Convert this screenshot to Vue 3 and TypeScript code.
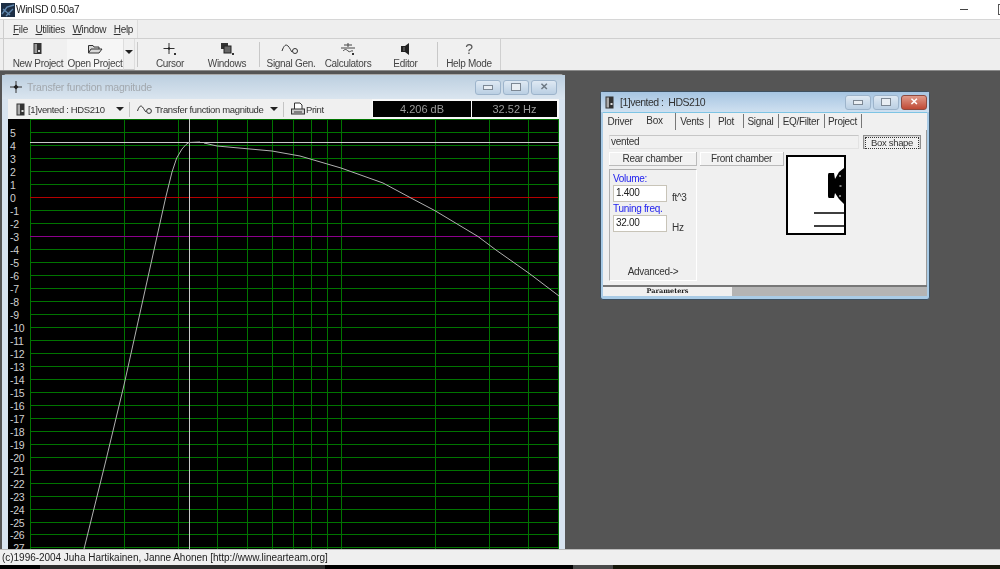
<template>
  <div class="app">
    <div class="titlebar soft">
      <svg class="logo" viewBox="0 0 14 14" width="14" height="14">
        <rect width="14" height="14" fill="#1d2f45" />
        <path d="M1 11 L6 4 L13 2 M2 6 L9 12 M5 13 L12 6" stroke="#5f86ad" stroke-width="1.4" fill="none" />
      </svg>
      <span class="app-name">WinISD 0.50a7</span>
      <span class="win-min"></span>
      <span class="win-max"></span>
    </div>

    <div class="menubar soft">
      <div class="menu-group">
        <a v-for="m in menus" :key="m.rest" class="menu-item"><u>{{ m.key }}</u>{{ m.rest }}</a>
      </div>
    </div>

    <div class="toolbar-row soft">
      <div class="toolbar">
        <button class="tool t-new">
          <svg viewBox="0 0 12 14" width="12" height="14"><rect x="1.5" y="1" width="8" height="11" fill="#333" /><rect x="2.5" y="2" width="2.5" height="9" fill="#999" /><rect x="6" y="8" width="2" height="2" fill="#ddd" /></svg>
          <span>New Project</span>
        </button>
        <button class="tool t-open">
          <svg viewBox="0 0 16 14" width="16" height="14"><path d="M1.5 11 V3.5 H6 L7 5 H12 V7 M1.5 11 L4 7 H15 L12 11 Z" fill="#d8d8d8" stroke="#333" /></svg>
          <span>Open Project</span>
        </button>
        <button class="tool-arrow"><i class="caret"></i></button>
        <i class="tb-sep"></i>
        <button class="tool t-cursor">
          <svg viewBox="0 0 16 14" width="16" height="14"><path d="M7 1 V12 M1.5 6.5 H12.5" stroke="#333" /><path d="M5.5 6.5 L7 5 L8.5 6.5 L7 8 Z" fill="#222" /><rect x="12" y="11" width="2" height="2" fill="#333" /></svg>
          <span>Cursor</span>
        </button>
        <button class="tool t-windows">
          <svg viewBox="0 0 16 14" width="16" height="14"><rect x="2" y="1" width="7" height="6" fill="#333" /><rect x="5" y="4" width="7" height="7" fill="#666" stroke="#222" /><rect x="13" y="11" width="2" height="2" fill="#333" /></svg>
          <span>Windows</span>
        </button>
        <i class="tb-sep"></i>
        <button class="tool t-signal">
          <svg viewBox="0 0 20 14" width="20" height="14"><path d="M1 9 C3 3 5 2 7 4 C9 6 10 9 11 10" stroke="#333" fill="none" /><circle cx="14" cy="9" r="2.5" stroke="#333" fill="none" /></svg>
          <span>Signal Gen.</span>
        </button>
        <button class="tool t-calc">
          <svg viewBox="0 0 16 14" width="16" height="14"><path d="M4 3 H12 M1 6 H15 M3 9 C5 7 6 7 8 9 C10 11 11 8 13 9" stroke="#444" fill="none" /><path d="M8 1 V5" stroke="#444" /><rect x="12" y="11" width="2" height="2" fill="#333" /></svg>
          <span>Calculators</span>
        </button>
        <button class="tool t-editor">
          <svg viewBox="0 0 12 14" width="12" height="14"><path d="M1 4 H5 L9 1 V13 L5 10 H1 Z" fill="#222" /><path d="M4 5 V9" stroke="#777" /></svg>
          <span>Editor</span>
        </button>
        <i class="tb-sep"></i>
        <button class="tool t-help">
          <b class="help-glyph">?</b>
          <span>Help Mode</span>
        </button>
      </div>
    </div>

    <div class="desktop">
      <section class="mdi graph-win">
        <header class="caption soft">
          <svg viewBox="0 0 12 12" width="12" height="12"><path d="M6 0 V12 M0 6 H12" stroke="#333" /><path d="M3.5 6 L6 3.5 L8.5 6 L6 8.5 Z" fill="#222" /></svg>
          <span class="caption-text">Transfer function magnitude</span>
          <div class="caption-btns">
            <span class="cbtn"><i class="g-min"></i></span>
            <span class="cbtn"><i class="g-rest"></i></span>
            <span class="cbtn"><i class="g-x">✕</i></span>
          </div>
        </header>
        <div class="graph-tools soft">
          <div class="combo c-project">
            <svg viewBox="0 0 10 13" width="10" height="13"><rect x="0.5" y="0.5" width="8" height="12" fill="#333" /><rect x="1.5" y="1.5" width="2.5" height="10" fill="#aaa" /><rect x="5.5" y="7" width="2" height="2" fill="#ddd" /></svg>
            <span>[1]vented : HDS210</span>
            <i class="caret"></i>
          </div>
          <i class="gt-sep"></i>
          <div class="combo c-func">
            <svg viewBox="0 0 16 9" width="16" height="9"><path d="M0.5 6 C2 1 4 0 5.5 2 C7 4 8 6 9 7" stroke="#333" fill="none" /><circle cx="12" cy="6" r="2.4" stroke="#333" fill="none" /></svg>
            <span>Transfer function magnitude</span>
            <i class="caret"></i>
          </div>
          <i class="gt-sep"></i>
          <div class="print">
            <svg viewBox="0 0 14 14" width="14" height="14"><path d="M3.5 7 V1 H9 L11 3 V7" fill="#fff" stroke="#333" /><rect x="0.5" y="7" width="13" height="5" fill="#ccc" stroke="#333" /><path d="M3 10 H11" stroke="#333" /></svg>
            <span>Print</span>
          </div>
          <div class="readouts">
            <div class="readout r-db">4.206 dB</div>
            <div class="readout r-hz">32.52 Hz</div>
          </div>
        </div>
        <svg class="plot" viewBox="8 119 551 430" width="551" height="430">
          <rect x="8" y="119" width="551" height="430" fill="#000" />
          <line v-for="x in vLines" :key="'v' + x" :x1="x" :x2="x" y1="119" y2="549" class="grid" />
          <line
            v-for="r in rows"
            :key="'h' + r.value"
            x1="30"
            x2="559"
            :y1="r.y"
            :y2="r.y"
            :stroke="r.color"
          />
          <line x1="30" x2="559" y1="119.5" y2="119.5" class="grid" />
          <line x1="558.5" x2="558.5" y1="119" y2="549" class="grid" />
          <line x1="30" x2="559" y1="142.5" y2="142.5" class="cursor-line" />
          <line x1="189.5" x2="189.5" y1="119" y2="549" class="cursor-line" />
          <path :d="curveLeft" class="curve" />
          <path :d="curveRight" class="curve" />
          <text v-for="r in rows" :key="'t' + r.value" x="10" :y="r.y + 4" class="tick">{{ r.value }}</text>
        </svg>
      </section>

      <section class="mdi param-win soft">
        <header class="caption active">
          <svg viewBox="0 0 10 13" width="10" height="13"><rect x="0.5" y="0.5" width="8" height="12" fill="#333" /><rect x="1.5" y="1.5" width="2.5" height="10" fill="#aaa" /><rect x="5.5" y="7" width="2" height="2" fill="#ddd" /></svg>
          <span class="caption-text">[1]vented :&nbsp; HDS210</span>
          <div class="caption-btns">
            <span class="cbtn"><i class="g-min"></i></span>
            <span class="cbtn"><i class="g-rest"></i></span>
            <span class="cbtn close"><i class="g-x">✕</i></span>
          </div>
        </header>
        <nav class="tabs">
          <span
            v-for="t in tabs"
            :key="t.name"
            class="tab"
            :class="{ on: t.name === 'Box', plain: t.name === 'Driver' }"
            :style="{ width: t.width + 'px' }"
          >{{ t.name }}</span>
        </nav>
        <div class="panel">
          <div class="shape-row">
            <div class="shape-field">vented</div>
            <button class="shape-btn"><span>Box shape</span></button>
          </div>
          <div class="panel-body">
            <div class="rear-col">
              <button class="flat-btn rear">Rear chamber</button>
              <div class="rear-box">
                <label>Volume:</label>
                <div class="field-row"><div class="input">1.400</div><span class="unit">ft^3</span></div>
                <label class="second">Tuning freq.</label>
                <div class="field-row"><div class="input">32.00</div><span class="unit">Hz</span></div>
                <div class="advanced">Advanced-&gt;</div>
              </div>
            </div>
            <button class="flat-btn front">Front chamber</button>
            <svg class="box-pic" viewBox="0 0 60 80" width="60" height="80">
              <rect x="1" y="1" width="58" height="78" fill="#fff" stroke="#000" stroke-width="2" />
              <path d="M43 18 H48 L49 24 L53 17 L58 13 V49 L53 44 L49 38 L48 43 H43 Q42 43 42 41 V20 Q42 18 43 18 Z" fill="#000" />
              <path d="M54 20 V22 M53.5 31 H55.5 M54 40 V42" stroke="#fff" />
              <path d="M28 58 H58 M28 71 H58" stroke="#000" stroke-width="1.5" />
            </svg>
          </div>
        </div>
        <div class="bottom-tabs">
          <span class="b-tab">Parameters</span>
          <span class="b-rest"></span>
        </div>
      </section>
    </div>

    <div class="statusbar soft">(c)1996-2004 Juha Hartikainen, Janne Ahonen [http://www.linearteam.org]</div>
    <div class="taskstrip">
      <i class="ts-a"></i><i class="ts-b"></i><i class="ts-c"></i><i class="ts-d"></i>
    </div>
  </div>
</template>

<script setup lang="ts">
import { computed } from 'vue';

const menus = [
  { key: 'F', rest: 'ile' },
  { key: 'U', rest: 'tilities' },
  { key: 'W', rest: 'indow' },
  { key: 'H', rest: 'elp' },
];

const tabs = [
  { name: 'Driver', width: 30 },
  { name: 'Box', width: 40 },
  { name: 'Vents', width: 33 },
  { name: 'Plot', width: 33 },
  { name: 'Signal', width: 34 },
  { name: 'EQ/Filter', width: 45 },
  { name: 'Project', width: 36 },
];

const vLines = [30.5, 124.5, 178.5, 217.5, 247.5, 272.5, 293.5, 311.5, 327.5, 341.5, 435.5, 489.5, 528.5];

const rows = computed(() => {
  const out = [];
  for (let v = 5; v >= -27; v--) {
    let color = '#007400';
    if (v === 0) color = '#b40000';
    if (v === -3) color = '#8c008c';
    out.push({ value: v, y: Math.round(197 - v * 12.98) + 0.5, color });
  }
  return out;
});

function toPath(points: number[][]): string {
  return points.map((p, i) => (i === 0 ? 'M' : 'L') + p[0] + ' ' + p[1]).join(' ');
}

const curveLeft = toPath([
  [84, 549], [106, 460], [124, 385], [154, 250], [165.7, 197.5], [172, 172], [176.7, 158],
  [182, 149], [186, 144.5], [189, 142.5], [200, 142],
]);
const curveRight = toPath([
  [204, 143], [217, 146], [250, 149], [272, 151], [300, 156], [341, 168], [383, 183], [410, 197.5],
  [435, 210.7], [478, 236.5], [496, 250], [530, 274], [559, 296],
]);
</script>

<style>
html,
body {
  margin: 0;
  background: #000;
}
</style>

<style scoped>
.app {
  width: 1000px;
  height: 569px;
  display: flex;
  flex-direction: column;
  overflow: hidden;
  font-family: "Liberation Sans", Arial, sans-serif;
  font-size: 10px;
  letter-spacing: -0.3px;
  color: #333;
}
/* the capture is a little soft everywhere except the plot lines */
.soft {
  filter: blur(0.35px);
}

.titlebar {
  height: 19px;
  flex: none;
  display: flex;
  align-items: center;
  background: #fff;
  padding-left: 1px;
  box-sizing: border-box;
}
.logo { flex: none; }
.app-name {
  margin-left: 1px;
  font-size: 10px;
  color: #222;
}
.win-min {
  margin-left: auto;
  width: 8px;
  height: 1px;
  background: #444;
}
.win-max {
  margin-left: 30px;
  margin-right: -10px;
  width: 10px;
  height: 9px;
  border: 1px solid #555;
  flex: none;
}

.menubar {
  height: 19px;
  flex: none;
  background: #eee;
  border-top: 1px solid #d6d6d6;
  box-sizing: border-box;
  display: flex;
}
.menu-group {
  width: 135px;
  margin-left: 3px;
  padding-left: 9px;
  box-sizing: border-box;
  display: flex;
  align-items: center;
  gap: 7.5px;
  border-left: 1px solid #ccc;
  border-right: 1px solid #ddd;
  background: #f0f0f0;
}
.menu-item {
  font-size: 10px;
  color: #333;
}

.toolbar-row {
  height: 33px;
  flex: none;
  background: #eee;
  border-top: 1px solid #cfcfcf;
  border-bottom: 1px solid #8a8a8a;
  box-sizing: border-box;
}
.toolbar {
  width: 498px;
  height: 100%;
  margin-left: 3px;
  padding-left: 5px;
  box-sizing: border-box;
  display: flex;
  align-items: stretch;
  border-left: 1px solid #ccc;
  border-right: 1px solid #cfcfcf;
  background: #f0f0f0;
}
.tool {
  border: 0;
  padding: 3px 0 0;
  margin: 0;
  background: none;
  font: inherit;
  letter-spacing: inherit;
  white-space: nowrap;
  color: #444;
  display: flex;
  flex-direction: column;
  align-items: center;
  justify-content: flex-start;
  gap: 2px;
  flex: none;
}
.tool svg { height: 14px; flex: none; }
.t-new { width: 58px; }
.t-open { width: 57px; background: #f6f6f6; border-right: 1px solid #ddd; border-bottom: 1px solid #c8c8c8; }
.t-cursor { width: 60px; margin-left: 2px; }
.t-windows { width: 54px; margin-right: 3px; }
.t-signal { width: 62px; }
.t-calc { width: 52px; }
.t-editor { width: 59px; margin-left: 2px; }
.t-help { width: 62px; }
.help-glyph {
  height: 14px;
  font-weight: normal;
  font-size: 14px;
  line-height: 14px;
  color: #555;
}
.tool-arrow {
  width: 13px;
  border: 0;
  border-right: 1px solid #ddd;
  border-bottom: 1px solid #c8c8c8;
  background: #f0f0f0;
  padding: 0 0 4px;
  display: flex;
  align-items: center;
  justify-content: center;
}
.caret {
  display: inline-block;
  width: 0;
  height: 0;
  border-left: 4px solid transparent;
  border-right: 4px solid transparent;
  border-top: 4px solid #222;
}
.tb-sep {
  width: 1px;
  margin: 3px 0 3px 2px;
  background: #c8c8c8;
  flex: none;
}

.desktop {
  flex: 1;
  position: relative;
  overflow: hidden;
  background: #555;
}
.mdi {
  position: absolute;
  box-sizing: border-box;
}
.graph-win {
  left: 2px;
  top: 3px;
  width: 563px;
  height: 500px;
  background: #d7e3ef;
  border-radius: 5px 5px 0 0;
  border-top: 1px solid #aaa;
  padding: 0 6px;
}
.caption {
  height: 24px;
  display: flex;
  align-items: center;
  gap: 5px;
  background: linear-gradient(#bccfe0, #dae5ef);
  margin: 0 -6px;
  padding: 0 8px 0 8px;
}
.caption-text {
  font-size: 10.5px;
  letter-spacing: -0.2px;
  color: #a2a8ae;
}
.caption-btns {
  margin-left: auto;
  display: flex;
  gap: 2px;
}
.cbtn {
  width: 26px;
  height: 15px;
  box-sizing: border-box;
  border: 1px solid #9db4cb;
  border-radius: 3px;
  background: linear-gradient(#dfe9f3, #bacfe3);
  display: flex;
  align-items: center;
  justify-content: center;
}
.cbtn.close {
  background: linear-gradient(#e09a8a, #c04a35);
  border-color: #8c4a40;
  color: #fff;
}
.g-min {
  width: 8px;
  height: 3px;
  background: #e9eef3;
  border: 1px solid #7d8894;
}
.g-rest {
  width: 8px;
  height: 6px;
  border: 1px solid #7d8894;
  background: #e9eef3;
}
.g-x {
  font-style: normal;
  font-size: 10px;
  line-height: 10px;
  font-weight: bold;
  color: #6d7883;
}
.close .g-x { color: #fff; }

.graph-tools {
  height: 20px;
  display: flex;
  align-items: center;
  background: #f0f0f0;
  padding-left: 8px;
  font-size: 9.5px;
  letter-spacing: -0.35px;
  color: #333;
  white-space: nowrap;
}
.combo {
  display: flex;
  align-items: center;
  flex: none;
}
.c-project { width: 109px; gap: 2px; }
.c-func { width: 149px; gap: 2px; padding-left: 7px; box-sizing: border-box; }
.c-project .caret, .c-func .caret { margin-left: auto; margin-right: 1px; }
.gt-sep {
  width: 1px;
  height: 15px;
  margin: 0 0 0 4px;
  background: #c4c4c4;
  flex: none;
}
.print {
  display: flex;
  align-items: center;
  gap: 1px;
  padding-left: 7px;
}
.readouts {
  margin-left: auto;
  display: flex;
  gap: 1px;
  background: #f8f8f8;
  height: 100%;
  padding: 2px 2px 2px 1px;
  box-sizing: border-box;
}
.readout {
  background: #000;
  color: #9a9a9a;
  display: flex;
  align-items: center;
  justify-content: center;
  font-size: 11px;
  letter-spacing: 0;
}
.r-db { width: 98px; }
.r-hz { width: 85px; }
.plot {
  display: block;
}
.grid { stroke: #007400; }
.cursor-line { stroke: #c8c8c8; }
.curve {
  stroke: #b0b0b0;
  fill: none;
}
.tick {
  fill: #d0d0d0;
  font-size: 10.5px;
  font-family: "Liberation Sans", Arial, sans-serif;
}

.param-win {
  left: 600px;
  top: 20px;
  width: 330px;
  height: 209px;
  background: #a9cbe6;
  border: 1px solid #3e5060;
  border-radius: 3px;
  padding: 0 2px 3px;
  display: flex;
  flex-direction: column;
}
.caption.active {
  height: 20px;
  flex: none;
  margin: 0 -2px;
  padding: 0 2px 0 4px;
  background: linear-gradient(#a6c5e2, #cfe0f0);
}
.caption.active .caption-text {
  color: #333;
  font-size: 10.5px;
  letter-spacing: -0.5px;
}
.caption.active .cbtn { width: 26px; }
.tabs {
  height: 18px;
  flex: none;
  display: flex;
  align-items: flex-end;
  padding-left: 2px;
  background: #f0f0f0;
  box-shadow: inset 0 1px 0 #7dc4e4;
}
.tab {
  height: 14px;
  margin-bottom: 2px;
  padding-right: 2px;
  display: flex;
  align-items: center;
  justify-content: center;
  font-size: 10px;
  color: #333;
  border-right: 1px solid #777;
  box-sizing: border-box;
  margin-right: 1px;
}
.tab.plain {
  border-right: 0;
  padding-right: 0;
}
.tab.on {
  height: 17px;
  margin-bottom: 0;
  padding-bottom: 3px;
  background: #f0f0f0;
}
.panel {
  flex: 1;
  background: #f0f0f0;
  padding: 5px 4px 0 6px;
  min-height: 0;
  border-right: 1px solid #999;
}
.shape-row {
  display: flex;
  height: 14px;
  gap: 4px;
}
.shape-field {
  width: 250px;
  box-sizing: border-box;
  border: 1px solid #e2e2e2;
  border-top-color: #c6c6c6;
  padding-left: 1px;
  line-height: 12px;
  font-size: 10px;
}
.shape-btn {
  width: 58px;
  padding: 1px;
  border: 1px solid #8e8e8e;
  background: #d8d8d8;
  font: inherit;
  letter-spacing: inherit;
  font-size: 9.5px;
  color: #333;
}
.shape-btn span {
  display: block;
  line-height: 10px;
  border: 1px dotted #333;
  background: #f0f0f0;
}
.panel-body {
  display: flex;
  align-items: flex-start;
  margin-top: 3px;
  gap: 3px;
}
.rear-col {
  width: 88px;
  flex: none;
}
.flat-btn {
  height: 14px;
  padding: 0;
  border: 0;
  border-right: 1px solid #bbb;
  border-bottom: 1px solid #bbb;
  background: #f2f2f2;
  font: inherit;
  letter-spacing: inherit;
  font-size: 10px;
  color: #333;
  box-shadow: inset 1px 1px 0 #fff;
}
.flat-btn.rear { width: 88px; display: block; }
.flat-btn.front { width: 84px; flex: none; }
.rear-box {
  margin-top: 3px;
  height: 112px;
  box-sizing: border-box;
  border-left: 1px solid #b0b0b0;
  border-top: 1px solid #b0b0b0;
  border-right: 1px solid #fff;
  border-bottom: 1px solid #fff;
  padding: 3px 0 0 3px;
  position: relative;
}
.rear-box label {
  display: block;
  color: #2222ee;
  font-size: 10px;
  line-height: 12px;
}
.rear-box label.second {
  margin-top: 1px;
}
.field-row {
  display: flex;
  align-items: flex-end;
  gap: 5px;
  margin-top: 0;
}
.input {
  width: 54px;
  height: 17px;
  box-sizing: border-box;
  background: #fff;
  border: 1px solid #c8c4b8;
  padding-left: 2px;
  font-size: 10px;
  line-height: 14px;
  color: #222;
}
.unit {
  font-size: 10px;
  color: #333;
  line-height: 10px;
  margin-bottom: -1px;
}
.advanced {
  margin-top: 34px;
  text-align: center;
  padding-right: 3px;
  font-size: 10px;
}
.box-pic {
  margin-left: -1px;
  margin-top: 3px;
  flex: none;
}
.bottom-tabs {
  height: 11px;
  flex: none;
  display: flex;
  border-top: 2px solid #777;
  box-sizing: border-box;
  background: #b4b4b4;
}
.b-tab {
  width: 129px;
  background: #f0f0f0;
  text-align: center;
  font-family: "DejaVu Serif", serif;
  font-weight: bold;
  font-size: 6.5px;
  line-height: 9px;
  letter-spacing: 0;
  color: #222;
}
.b-rest { flex: 1; }

.statusbar {
  height: 16px;
  flex: none;
  box-sizing: border-box;
  background: #efefef;
  border-top: 1px solid #bbb;
  padding-left: 2px;
  line-height: 15px;
  font-size: 10px;
  letter-spacing: -0.03px;
  color: #222;
}
.taskstrip {
  height: 4px;
  flex: none;
  display: flex;
  background: #17170a;
}
.taskstrip i { display: block; height: 100%; }
.ts-a { width: 40px; background: #000; }
.ts-b { width: 285px; background: #2e2e2e; }
.ts-c { width: 248px; background: #000; }
.ts-d { width: 40px; background: #4a4a4a; }
</style>
